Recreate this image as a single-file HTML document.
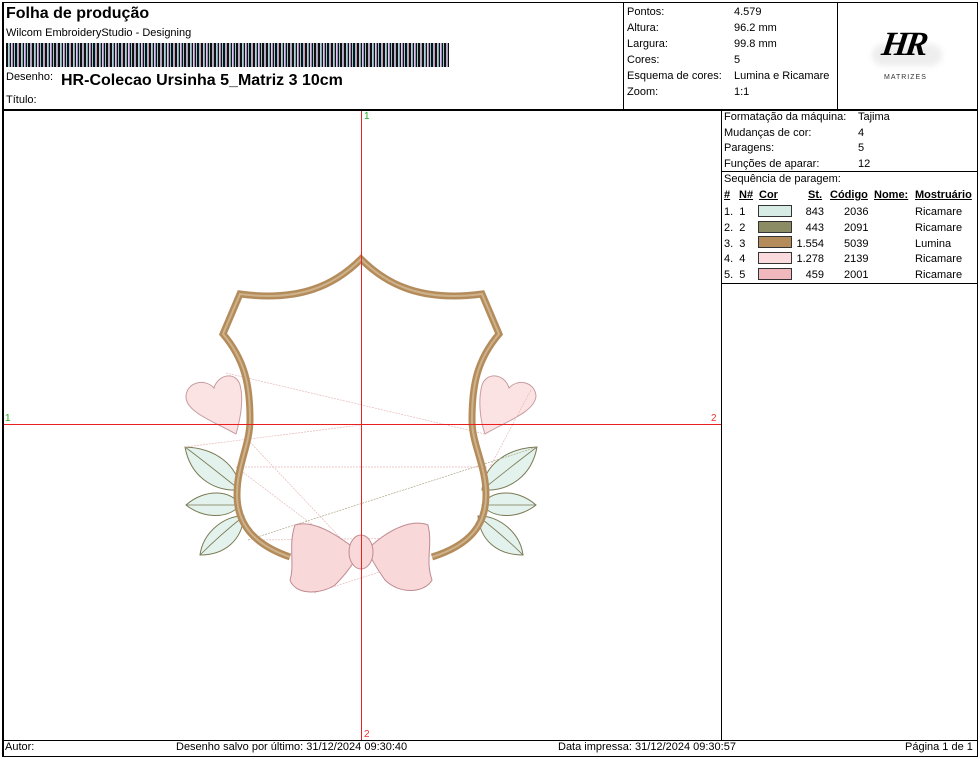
<!DOCTYPE html>
<html><head><meta charset="utf-8"><style>
*{margin:0;padding:0;box-sizing:border-box}
body{width:980px;height:759px;background:#fff;position:relative;overflow:hidden;font-family:"Liberation Sans",Arial,sans-serif;color:#000}
.a{position:absolute;white-space:nowrap}
.l{position:absolute;background:#000}
.f{font-size:11px}
.u{text-decoration:underline;font-weight:bold}
.sw{position:absolute;width:34px;height:12px;border:1px solid #333}
</style></head><body>
<div class="l" style="left:2px;top:2px;width:976px;height:1px"></div>
<div class="l" style="left:2px;top:756px;width:976px;height:1px"></div>
<div class="l" style="left:2px;top:2px;width:2px;height:755px"></div>
<div class="l" style="left:977px;top:2px;width:1px;height:755px"></div>
<div class="l" style="left:2px;top:109px;width:976px;height:2px"></div>
<div class="l" style="left:623px;top:2px;width:1px;height:108px"></div>
<div class="l" style="left:837px;top:2px;width:1px;height:108px"></div>
<div class="l" style="left:721px;top:110px;width:1px;height:631px"></div>
<div class="l" style="left:2px;top:740px;width:976px;height:1px"></div>
<div class="l" style="left:721px;top:171px;width:257px;height:1px"></div>
<div class="l" style="left:721px;top:283px;width:257px;height:1px"></div>

<div class="a" style="left:6px;top:5px;font-size:16px;font-weight:bold">Folha de produção</div>
<div class="a f" style="left:6px;top:27px">Wilcom EmbroideryStudio - Designing</div>
<div class="a" style="left:6px;top:43px;width:443px;height:24px;background:repeating-linear-gradient(90deg,#111 0 2px,#bcd 2px 3px,#7aa 3px 4px,#111 4px 5px,#dce 5px 6px,#a8b 6px 7px,#111 7px 8px,#9cc 8px 9px,#111 9px 11px,#9bd 11px 12px,#c9a 12px 13px)"></div>
<div class="a f" style="left:6px;top:71px">Desenho:</div>
<div class="a" style="left:61px;top:72px;font-size:16px;font-weight:bold">HR-Colecao Ursinha 5_Matriz 3 10cm</div>
<div class="a f" style="left:6px;top:94px">Título:</div>

<div class="a f" style="left:627px;top:4px;line-height:16px">Pontos:<br>Altura:<br>Largura:<br>Cores:<br>Esquema de cores:<br>Zoom:</div>
<div class="a f" style="left:734px;top:4px;line-height:16px">4.579<br>96.2 mm<br>99.8 mm<br>5<br>Lumina e Ricamare<br>1:1</div>

<div class="a" style="left:872px;top:44px;width:70px;height:22px;border-radius:12px;background:#eee;filter:blur(3px)"></div>
<div class="a" style="left:882px;top:26px;font-family:'Liberation Serif',serif;font-style:italic;font-size:34px;font-weight:bold;letter-spacing:-3px;transform:skewX(-8deg)">HR</div>
<div class="a" style="left:884px;top:74px;font-size:7px;letter-spacing:1px;color:#333">MATRIZES</div>

<div class="a f" style="left:724px;top:110px;line-height:15.5px">Formatação da máquina:<br>Mudanças de cor:<br>Paragens:<br>Funções de aparar:</div>
<div class="a f" style="left:858px;top:110px;line-height:15.5px">Tajima<br>4<br>5<br>12</div>
<div class="a f" style="left:724px;top:173px">Sequência de paragem:</div>
<div class="a f" style="left:724px;top:189px"><span class="u">#</span></div>
<div class="a f" style="left:739px;top:189px"><span class="u">N#</span></div>
<div class="a f" style="left:759px;top:189px"><span class="u">Cor</span></div>
<div class="a f" style="left:808px;top:189px"><span class="u">St.</span></div>
<div class="a f" style="left:830px;top:189px"><span class="u">Código</span></div>
<div class="a f" style="left:874px;top:189px"><span class="u">Nome:</span></div>
<div class="a f" style="left:915px;top:189px"><span class="u">Mostruário</span></div>
<div class="a f" style="left:724px;top:205px;line-height:15.8px">1.&nbsp; 1<br>2.&nbsp; 2<br>3.&nbsp; 3<br>4.&nbsp; 4<br>5.&nbsp; 5</div>
<div class="sw" style="left:758px;top:205px;background:#d8ece6"></div>
<div class="sw" style="left:758px;top:221px;background:#8c8c64"></div>
<div class="sw" style="left:758px;top:236px;background:#b48c5c"></div>
<div class="sw" style="left:758px;top:252px;background:#fadadc"></div>
<div class="sw" style="left:758px;top:268px;background:#f0b8bc"></div>
<div class="a f" style="left:790px;top:205px;width:34px;text-align:right;line-height:15.8px">843<br>443<br>1.554<br>1.278<br>459</div>
<div class="a f" style="left:844px;top:205px;line-height:15.8px">2036<br>2091<br>5039<br>2139<br>2001</div>
<div class="a f" style="left:915px;top:205px;line-height:15.8px">Ricamare<br>Ricamare<br>Lumina<br>Ricamare<br>Ricamare</div>

<svg class="a" style="left:0;top:0" width="980" height="759">
<g fill="#2a2" font-size="10" font-family="Liberation Sans"><text x="364" y="119">1</text><text x="5" y="421">1</text></g>
<g fill="#e33" font-size="10" font-family="Liberation Sans"><text x="711" y="421">2</text><text x="364" y="737">2</text></g>
<!-- leaves -->
<g fill="#e3f2ec" stroke="#7a7a55" stroke-width="1">
<path d="M185,447 C215,448 238,465 240,490 C212,492 190,475 185,447Z"/>
<path d="M186,505 C205,488 232,490 240,505 C228,520 202,518 186,505Z"/>
<path d="M200,555 C203,532 225,515 244,516 C242,540 225,555 200,555Z"/>
<path d="M537,447 C507,448 484,465 482,490 C510,492 532,475 537,447Z"/>
<path d="M536,505 C517,488 490,490 482,505 C494,520 520,518 536,505Z"/>
<path d="M523,555 C520,532 498,515 478,516 C480,540 497,555 523,555Z"/>
</g>
<g fill="none" stroke="#7a7a55" stroke-width="0.8">
<path d="M185,447 C205,462 225,478 240,490"/>
<path d="M186,505 L240,505"/>
<path d="M200,555 C215,540 230,527 244,516"/>
<path d="M537,447 C517,462 497,478 482,490"/>
<path d="M536,505 L482,505"/>
<path d="M523,555 C508,540 492,527 478,516"/>
</g>
<!-- hearts -->
<g fill="#fbe3e4" stroke="#c89ca0" stroke-width="1">
<path d="M236,434 C215,422 185,412 186,396 C187,382 205,378 214,388 C218,374 236,371 240,385 C244,400 240,420 236,434Z"/>
<path d="M485,434 C505,422 535,412 536,396 C535,382 518,378 509,388 C505,374 487,371 482,385 C478,400 480,420 485,434Z"/>
</g>
<!-- jump lines -->
<g stroke="#e8b8b8" stroke-width="0.7" stroke-dasharray="2,1">
<line x1="226" y1="373" x2="485" y2="434"/>
<line x1="236" y1="467" x2="488" y2="467"/>
<line x1="236" y1="467" x2="367" y2="566"/>
<line x1="248" y1="440" x2="367" y2="566"/>
<line x1="531" y1="390" x2="490" y2="467"/>
<line x1="185" y1="447" x2="361" y2="425"/>
<line x1="314" y1="593" x2="432" y2="555"/>
<line x1="260" y1="540" x2="430" y2="538"/>
</g>
<line x1="248" y1="540" x2="537" y2="447" stroke="#b0a888" stroke-width="0.7" stroke-dasharray="2,1"/>
<!-- shield -->
<g fill="none" stroke="#b48c5c" stroke-width="7" stroke-linejoin="miter">
<path d="M290,557 C255,545 237,525 237,495 C237,465 250,445 250,420 C250,385 245,360 223,334 L240,294 C300,302 335,285 361,259 C387,285 422,302 482,294 L499,334 C477,360 472,385 472,420 C472,445 486,465 486,495 C486,525 470,545 432,557"/>
</g>
<g fill="none" stroke="#ceb28a" stroke-width="2">
<path d="M290,557 C255,545 237,525 237,495 C237,465 250,445 250,420 C250,385 245,360 223,334 L240,294 C300,302 335,285 361,259 C387,285 422,302 482,294 L499,334 C477,360 472,385 472,420 C472,445 486,465 486,495 C486,525 470,545 432,557"/>
</g>
<!-- bow -->
<g fill="#f9d8da" stroke="#c08a90" stroke-width="1">
<path d="M350,545 C330,530 310,520 295,525 C288,545 295,565 290,580 C295,595 320,595 335,585 C345,575 352,565 355,560Z"/>
<path d="M372,545 C395,525 415,520 428,525 C433,545 425,560 432,580 C425,593 400,595 385,580 C378,570 372,560 370,555Z"/>
<ellipse cx="361" cy="552" rx="12" ry="17"/>
</g>
</svg>
<div class="a" style="left:361px;top:111px;width:1px;height:629px;background:#e82020"></div>
<div class="a" style="left:4px;top:424px;width:717px;height:1px;background:#e82020"></div>

<div class="a f" style="left:5px;top:741px">Autor:</div>
<div class="a f" style="left:176px;top:741px">Desenho salvo por último: 31/12/2024 09:30:40</div>
<div class="a f" style="left:558px;top:741px">Data impressa: 31/12/2024 09:30:57</div>
<div class="a f" style="left:905px;top:741px">Página 1 de 1</div>
</body></html>
